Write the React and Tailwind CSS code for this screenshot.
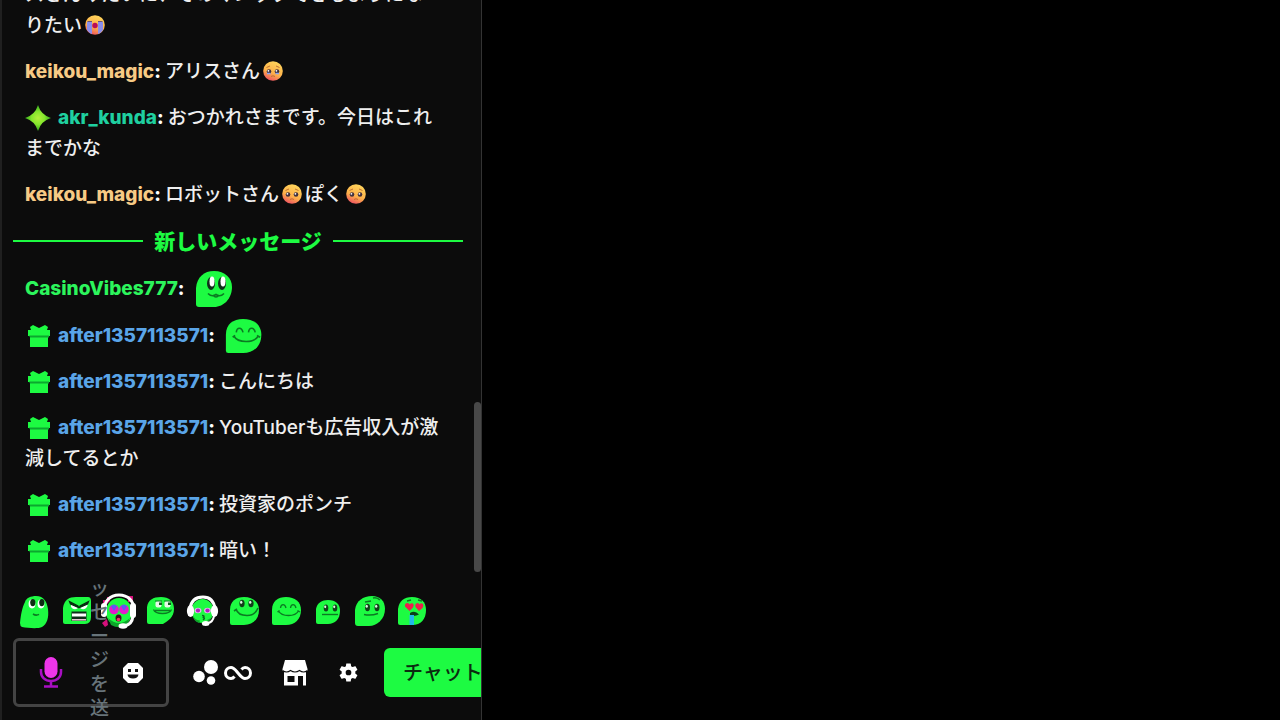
import React from "react";

const G = "#1dfb42";
const D = "#0b7a22";

const BLOB = "M4 17C4 8 10 4 18 4C27 4 33 9 33 17C33 26 27 32 18 32H6Q4 32 4 30Z";

function Svg({ children, className = "size-9" }) {
  return (
    <svg viewBox="0 0 36 36" className={className} aria-hidden="true">
      {children}
    </svg>
  );
}

function WideEyes({ x1, x2, y, r = 3 }) {
  return (
    <g>
      {[x1, x2].map((x) => (
        <g key={x}>
          <ellipse cx={x} cy={y} rx={r} ry={r + 1.2} fill="#123f1a" />
          <ellipse cx={x - 0.8} cy={y - 1.2} rx={r * 0.45} ry={r * 0.6} fill="#dff5e2" />
        </g>
      ))}
    </g>
  );
}

function Peek() {
  return (
    <Svg>
      <path d="M9 9C10 5 15 3 20 3C28 3 31 9 32 16C33 25 31 31 26 34C22 36 12 35 6 34Q4 33 4 30C5 21 6 15 9 9Z" fill={G} />
      <ellipse cx="16" cy="11" rx="3.4" ry="4.4" fill="#fff" />
      <ellipse cx="25" cy="11" rx="3.4" ry="4.4" fill="#fff" />
      <ellipse cx="16.8" cy="9.6" rx="2.6" ry="3.6" fill="#0d2b12" />
      <ellipse cx="25.8" cy="9.6" rx="2.6" ry="3.6" fill="#0d2b12" />
      <path d="M17 21Q20 23 23 21.4" stroke={D} strokeWidth="1.6" fill="none" />
    </Svg>
  );
}

function Angry() {
  return (
    <Svg>
      <path d="M5 15C6 7 11 4 18 4H30Q33 4 33 8V24Q33 31 27 31H7Q5 31 5 29Z" fill={G} />
      <path d="M13 11L20 15Q16 18 13 14ZM30 11L22 15Q26 18 29 14Z" fill="#fff" />
      <path d="M11.500 8.500L20 13L20.500 14.500L12.500 11ZM30.500 8.500L22 13L21.500 14.500L29.500 11Z" fill="#082c10" stroke="#082c10" strokeWidth="1.200" />
      <path d="M13.500 18.500H28.500V28H13.500Z" fill="#10301a" />
      <path d="M14 20.500H28V23.500H14Z" fill="#fff" />
      <path d="M14 26.800H28" stroke="#e9c7d2" strokeWidth="1.600" />
    </Svg>
  );
}

function Hyped() {
  return (
    <Svg>
      <path d="M3 7H7V4H10V8L6 12H3ZM28 3H33V9H28ZM2 30L7 26L8 32L5 34Z" fill="#d6107c" />
      <path d="M4 18C4 8 10 2 19 2C28 2 34 8 34 17" stroke="#fff" strokeWidth="3" fill="none" />
      <ellipse cx="19" cy="19" rx="13" ry="14" fill={G} />
      <path d="M8 25Q19 35 30 25L26 33Q18 36 11 32Z" fill="#0da52a" />
      <rect x="1" y="10" width="6" height="14" rx="3" fill="#fff" />
      <rect x="30" y="10" width="6" height="15" rx="3" fill="#fff" />
      <circle cx="14" cy="16.500" r="4.800" fill="#e31ccb" />
      <circle cx="24" cy="16.500" r="4.800" fill="#e31ccb" />
      <path d="M11 13Q14 10 17 13L14 18ZM21 13Q24 10 27 13L24 18Z" fill="#5a5cf0" />
      <ellipse cx="18.500" cy="25" rx="3" ry="3.600" fill="#410b1e" />
      <ellipse cx="18.500" cy="26.500" rx="1.800" ry="1.800" fill="#f4306c" />
      <path d="M33 23Q32 32 24 33" stroke="#fff" strokeWidth="3" fill="none" />
      <ellipse cx="23" cy="33" rx="4.500" ry="2.800" fill="#fff" />
    </Svg>
  );
}

function SideSmile() {
  return (
    <Svg>
      <path d="M5 14C6 7 11 4 19 4C27 4 32 8 32 16C32 24 26 28 21 31H7Q5 31 5 29Z" fill={G} />
      <rect x="13.500" y="8" width="6" height="6.500" rx="2" fill="#e6f8e8" />
      <rect x="22.500" y="8" width="6" height="6.500" rx="2" fill="#e6f8e8" />
      <path d="M17 9.500H20V12H17ZM26 9.500H29V12H26Z" fill="#0c5e1d" />
      <path d="M13 8H20M22 8H29" stroke={D} strokeWidth="1" />
      <path d="M11.500 16.500Q13 20.500 20.500 20.500Q28 20.500 29.500 16.500M13 17.500H28" stroke={D} strokeWidth="1.300" fill="none" />
    </Svg>
  );
}

function Headset() {
  return (
    <Svg>
      <path d="M6 16C7 7 12 4 19 4C26 4 30 8 31 16" stroke="#fff" strokeWidth="3" fill="none" />
      <ellipse cx="18.500" cy="18" rx="11" ry="12" fill={G} />
      <path d="M8.500 21Q10 27 16 27.500L15 30Q9 28 8.500 21ZM28.500 21Q28 25 23 27L25 29Z" fill="#0da52a" />
      <ellipse cx="6.500" cy="18" rx="3.600" ry="6" fill="#fff" />
      <ellipse cx="30.500" cy="18" rx="3.600" ry="6" fill="#fff" />
      <ellipse cx="14" cy="17.500" rx="3.400" ry="2.800" fill="#e3b8ea" />
      <ellipse cx="23.500" cy="17.500" rx="3.400" ry="2.800" fill="#e3b8ea" />
      <circle cx="14" cy="17.500" r="2.100" fill="#b01fc0" />
      <circle cx="23.500" cy="17.500" r="2.100" fill="#b01fc0" />
      <path d="M18 22.500Q21 22.500 19.500 24.500Q21.500 25 19 27" stroke="#0b6a20" strokeWidth="1.500" fill="none" />
      <path d="M30 23Q29 29 24 30" stroke="#fff" strokeWidth="2" fill="none" />
      <ellipse cx="21.700" cy="30.500" rx="3.800" ry="2.500" fill="#fff" />
    </Svg>
  );
}

function Grin() {
  return (
    <Svg>
      <path d={BLOB} fill={G} />
      <WideEyes x1={16} x2={25} y={10.5} r={2.6} />
      <path d="M10 16Q12 22.500 21 22.500Q29 22.500 32 15M8 18L11 16" stroke={D} strokeWidth="1.600" fill="none" />
    </Svg>
  );
}

function Happy({ className }) {
  return (
    <Svg className={className}>
      <path d={BLOB} fill={G} />
      <path d="M12.500 15C13 10.500 17 10.500 18 15M22.500 15C23 10.500 27 10.500 28 15" stroke={D} strokeWidth="1.300" fill="none" />
      <path d="M10.500 18Q13 22.500 20.500 22.500Q28 22.500 30.500 18M29.500 17.500L32 19M9.500 19L11.500 17.500" stroke={D} strokeWidth="1.300" fill="none" />
    </Svg>
  );
}

function Flat() {
  return (
    <Svg>
      <path d="M6 16C7 10 12 7 18 7C26 7 30 11 30 18C30 26 25 31 18 31H8Q6 31 6 29Z" fill={G} />
      <WideEyes x1={16} x2={25} y={15} r={2.3} />
      <path d="M12 21.500H28" stroke={D} strokeWidth="1.400" />
    </Svg>
  );
}

function Doubt() {
  return (
    <Svg>
      <path d="M3 17C4 8 11 3 20 3C28 3 33 8 33 16C33 26 25 33 17 33H6Q3 33 3 30Z" fill={G} />
      <path d="M13 9L19 8M21 5Q25 4 28 7" stroke={D} strokeWidth="1.700" fill="none" />
      <WideEyes x1={15.5} x2={25} y={14.5} r={2.5} />
      <path d="M12 21.500Q19 23 26 20.500" stroke={D} strokeWidth="1.600" fill="none" />
    </Svg>
  );
}

function Love() {
  return (
    <Svg>
      <path d="M4 16C5 8 10 4 18 4C27 4 32 9 32 17C32 26 27 32 18 32H6Q4 32 4 30Z" fill={G} />
      <path d="M13 8L17 7M24 7L28 8" stroke={D} strokeWidth="1.300" />
      <path d="M15.500 18L11 13.500Q10.500 10 13.500 10Q15 10 15.800 11.500Q17 9.500 19 10.500Q20.500 12 19 14.500ZM25 18L21.500 14Q20.500 10.500 23.500 10Q25 10 25.500 11.500Q27 9.500 29 11Q30 13 28.500 15Z" fill="#ee1d4d" />
      <path d="M16 20Q21 17 25 21.500Q20 24 16 22Z" fill="#0b3f18" />
      <path d="M15.500 22H20V32H15.500Z" fill="#22b8e8" />
    </Svg>
  );
}

function Cute({ className }) {
  return (
    <Svg className={className}>
      <path d="M0 17C1 6 8 0 18 0C29 0 36 7 36 16C36 27 28 36 18 36H3Q0 36 0 33Z" fill={G} />
      <ellipse cx="15" cy="12.500" rx="4" ry="6.500" fill="#10301a" />
      <ellipse cx="26" cy="12.500" rx="4" ry="6.500" fill="#10301a" />
      <ellipse cx="16" cy="10.500" rx="2.500" ry="5" fill="#fff" />
      <ellipse cx="27" cy="10.500" rx="2.500" ry="5" fill="#fff" />
      <path d="M12 22.500Q16 26.500 20 23.500Q24 26.500 28 22.500M17 24Q20 28 23 24" stroke={D} strokeWidth="1.600" fill="none" />
    </Svg>
  );
}

function Gift() {
  return (
    <svg viewBox="0 0 22 22" className="ml-[3px] mr-2 inline-block size-[22px] align-[-5px]" aria-label="ギフト">
      <path d="M0 5H3L2 2L5 0L11 3L17 0L20 2L19 5H22V11H0Z" fill={G} />
      <path d="M2 10H20V22H2Z" fill={G} />
      <path d="M1 10.500H21V12.500H2Z" fill="#0ca82f" />
    </svg>
  );
}

function Sparkle() {
  return (
    <svg viewBox="0 0 26 26" className="mr-[7px] inline-block size-[26px] align-[-7px]" aria-label="バッジ">
      <defs>
        <radialGradient id="spark">
          <stop offset="0" stopColor="#b4f03c" />
          <stop offset="0.500" stopColor="#84e62c" />
          <stop offset="1" stopColor="#2fa51c" />
        </radialGradient>
      </defs>
      <path d="M13 0Q16 10 26 13Q16 16 13 26Q10 16 0 13Q10 10 13 0Z" fill="url(#spark)" />
    </svg>
  );
}

function Emoji({ kind }) {
  return (
    <svg viewBox="0 0 20 20" className="mx-[3px] inline-block size-5 align-[-3px]" aria-label={kind === "cry" ? "大泣き" : "うるうる"}>
      <defs>
        <linearGradient id="skin" x1="0.700" y1="0" x2="0.300" y2="1">
          <stop offset="0" stopColor="#ffd65c" />
          <stop offset="0.600" stopColor="#fdb04a" />
          <stop offset="1" stopColor="#ee4f62" />
        </linearGradient>
      </defs>
      <circle cx="10" cy="10" r="9.800" fill="url(#skin)" />
      {kind === "cry" ? (
        <g>
          <path d="M2 7H7V19Q4 18 2 15ZM18 7H13V19Q16 18 18 15Z" fill="#8a8eea" />
          <path d="M2.500 6.500H7M17.500 6.500H13" stroke="#6a5478" strokeWidth="1.200" />
          <circle cx="10" cy="10.500" r="2.700" fill="#b80e58" />
        </g>
      ) : (
        <g>
          <circle cx="6" cy="10.500" r="2.300" fill="#42303d" />
          <circle cx="14" cy="10.500" r="2.300" fill="#42303d" />
          <circle cx="5.400" cy="9.800" r="0.900" fill="#fff" />
          <circle cx="13.400" cy="9.800" r="0.900" fill="#fff" />
          {kind === "tears" && <path d="M4 12.500H7.500M12.500 12.500H16" stroke="#8aa0f0" strokeWidth="1.500" />}
          <path d="M3.500 6.500L7 5M16.500 6.500L13 5M8 15.500Q10 14 12 15.500" stroke="#b8692e" strokeWidth="0.900" fill="none" />
        </g>
      )}
    </svg>
  );
}

function Message({ name, color, badge, tall, children }) {
  return (
    <li className={tall ? "flex h-8 items-center" : ""}>
      <p>
        {badge}
        <span className={"font-extrabold " + color}>{name}</span>
        <span className="font-extrabold text-white [font-feature-settings:'calt'_0]">: </span>
        {children}
      </p>
    </li>
  );
}

const AFTER = { name: "after1357113571", color: "text-[#5aa5e8]", badge: <Gift /> };
const KEIKOU = { name: "keikou_magic", color: "text-[#f7ca85]" };

const QUICK = [
  ["のぞき見", Peek],
  ["怒り", Angry],
  ["興奮", Hyped],
  ["にやり", SideSmile],
  ["ヘッドセット", Headset],
  ["笑顔", Grin],
  ["うれしい", Happy],
  ["真顔", Flat],
  ["疑い", Doubt],
  ["大好き", Love],
];

export default function App() {
  return (
    <div className="h-screen overflow-hidden bg-black font-['Inter','Noto_Sans_CJK_JP',sans-serif]" lang="ja">
      <aside className="flex h-full w-full max-w-[482px] flex-col overflow-hidden border-l-2 border-r border-l-[#202020] border-r-[#333] bg-[#0c0c0c]">
        <section className="relative z-10 flex min-h-0 flex-1 flex-col justify-end overflow-hidden bg-[#0c0c0c] pb-2 pl-[11px] pr-[18px]" aria-label="チャット">
          <ul className="flex flex-col gap-[15px] pr-5 pl-3 text-[19px] leading-[31px] font-medium text-[#efefef]">
            <li>
              <p>
                スさんみたいに、そのマジックできるようにな
                <span className="inline-block">
                  りたい
                  <Emoji kind="cry" />
                </span>
              </p>
            </li>
            <Message {...KEIKOU}>
              アリスさん
              <Emoji kind="tears" />
            </Message>
            <Message name="akr_kunda" color="text-[#1fd0a0]" badge={<Sparkle />}>
              おつかれさまです。今日はこれまでかな
            </Message>
            <Message {...KEIKOU}>
              ロボットさん
              <Emoji kind="plead" />
              ぽく
              <Emoji kind="plead" />
            </Message>
            <li className="-mr-5 -ml-3 flex h-8 items-center gap-[11px] text-[21px] font-extrabold text-[#1dfb42]">
              <span className="h-0.5 flex-1 bg-[#1dfb42]" />
              <h2>新しいメッセージ</h2>
              <span className="h-0.5 flex-1 bg-[#1dfb42]" />
            </li>
            <Message name="CasinoVibes777" color="text-[#2cf55c]" tall>
              <Cute className="-my-3 ml-[7px] inline-block size-9" />
            </Message>
            <Message {...AFTER} tall>
              <Happy className="-my-3 ml-0.5 inline-block size-11" />
            </Message>
            <Message {...AFTER}>こんにちは</Message>
            <Message {...AFTER}>YouTuberも広告収入が激減してるとか</Message>
            <Message {...AFTER}>投資家のポンチ</Message>
            <Message {...AFTER}>暗い！</Message>
          </ul>
          <div className="absolute right-0 bottom-[2px] h-[170px] w-[7px] rounded-full bg-[#484848]" />
        </section>

        <footer className="pl-[11px]">
          <div className="flex h-16 items-center gap-[6px] pl-[3px] pt-[10px]">
            {QUICK.map(([label, Face]) => (
              <button key={label} type="button" aria-label={label} className="size-9 shrink-0">
                <Face />
              </button>
            ))}
          </div>
          <form className="flex items-center pb-[13px]">
            <div className="relative flex h-[69px] w-[156px] shrink-0 items-center justify-between rounded-md border-3 border-[#444] pr-[23px] pl-[22px]">
              <button type="button" aria-label="音声入力">
                <svg viewBox="0 0 26 34" className="h-[34px] w-[26px]" aria-hidden="true">
                  <rect x="6.500" y="1" width="13" height="21" rx="6.500" fill="#ee35ea" />
                  <path d="M3 13V16C3 21 7 25 13 25C19 25 23 21 23 16V13" stroke="#a80fc2" strokeWidth="2.500" fill="none" />
                  <path d="M13 25V30M6 30.500H20" stroke="#a80fc2" strokeWidth="2.500" />
                </svg>
              </button>
              <label className="sr-only" htmlFor="message">メッセージを送信する</label>
              <textarea
                id="message"
                placeholder="メッセージを送信する"
                className="absolute top-1/2 left-[74px] h-60 w-5 -translate-y-1/2 resize-none overflow-hidden bg-transparent text-[19px] leading-6 font-medium break-all text-white outline-none placeholder:text-[#68747a]"
              />
              <button type="button" aria-label="絵文字">
                <svg viewBox="0 0 20 20" className="size-5" aria-hidden="true">
                  <path d="M5 0H15L20 5V15L15 20H5L0 15V5Z" fill="#fff" />
                  <path d="M5 6H8V9H5ZM12 6H15V9H12ZM4.500 11.500H15.500Q15 15.500 10 15.500Q5 15.500 4.500 11.500Z" fill="#111" />
                </svg>
              </button>
            </div>
            <button type="button" aria-label="ポイント" className="ml-6 flex shrink-0 items-center gap-[5px]">
              <svg viewBox="0 0 26 26" className="size-[26px]" aria-hidden="true">
                <circle cx="18" cy="7" r="7" fill="#fff" />
                <circle cx="6" cy="16.500" r="5.800" fill="#fff" />
                <circle cx="18" cy="20.500" r="4.300" fill="#fff" />
              </svg>
              <svg viewBox="0 0 28 16" className="h-4 w-7" aria-hidden="true">
                <path d="M10.500 11.500Q9 13.500 7 13.500A5.500 5.500 0 0 1 7 2.500C10 2.500 11.500 5 14 8C16.500 11 18 13.500 21 13.500A5.500 5.500 0 0 0 21 2.500Q19 2.500 17.500 4.500" stroke="#fff" strokeWidth="3" fill="none" />
              </svg>
            </button>
            <button type="button" aria-label="ストア" className="ml-[30px] shrink-0">
              <svg viewBox="0 0 26 26" className="size-[26px]" aria-hidden="true">
                <path d="M3 0H23L25.500 9V11H0.500V9Z" fill="#fff" />
                <path d="M2 13H24V25.500H21V16H16V25.500H2ZM5.500 16V22H12.500V16Z" fill="#fff" fillRule="evenodd" />
                <path d="M2 10H24V14.500H2Z" fill="#fff" />
                <path d="M0.500 10.500Q4.500 13.500 8.500 10.500Q13 13.500 17.500 10.500Q21.500 13.500 25.500 10.500" stroke="#0c0c0c" strokeWidth="1.100" fill="none" />
              </svg>
            </button>
            <button type="button" aria-label="設定" className="ml-[31px] shrink-0">
              <svg viewBox="2 2 20 20" className="size-[19px]" aria-hidden="true">
                <path fill="#fff" d="M19.140 12.940c.040-.300.060-.610.060-.940 0-.320-.020-.640-.070-.940l2.030-1.580a.49.49 0 0 0 .120-.610l-1.920-3.320a.488.488 0 0 0-.590-.220l-2.390.960c-.500-.380-1.030-.700-1.620-.940l-.360-2.540a.484.484 0 0 0-.480-.410h-3.840c-.240 0-.430.170-.470.410l-.360 2.540c-.590.240-1.130.570-1.620.940l-2.390-.960c-.220-.080-.470 0-.590.220L2.740 8.870c-.120.210-.080.470.120.610l2.030 1.580c-.050.300-.090.630-.090.940s.020.640.070.940l-2.030 1.580a.49.49 0 0 0-.120.610l1.920 3.320c.120.220.370.290.590.220l2.390-.960c.500.380 1.030.700 1.620.940l.360 2.540c.050.240.240.410.480.410h3.840c.240 0 .440-.170.470-.410l.360-2.540c.590-.240 1.130-.560 1.620-.940l2.390.960c.220.080.470 0 .590-.220l1.920-3.320c.120-.220.070-.470-.120-.610l-2.010-1.580zM12 15A3 3 0 1 1 12 9a3 3 0 0 1 0 6z" />
              </svg>
            </button>
            <button type="submit" className="ml-[26px] h-[49px] shrink-0 rounded-md bg-[#1dfb42] px-[19px] text-xl font-medium text-[#0b2b10]">
              チャット
            </button>
          </form>
        </footer>
      </aside>
    </div>
  );
}
